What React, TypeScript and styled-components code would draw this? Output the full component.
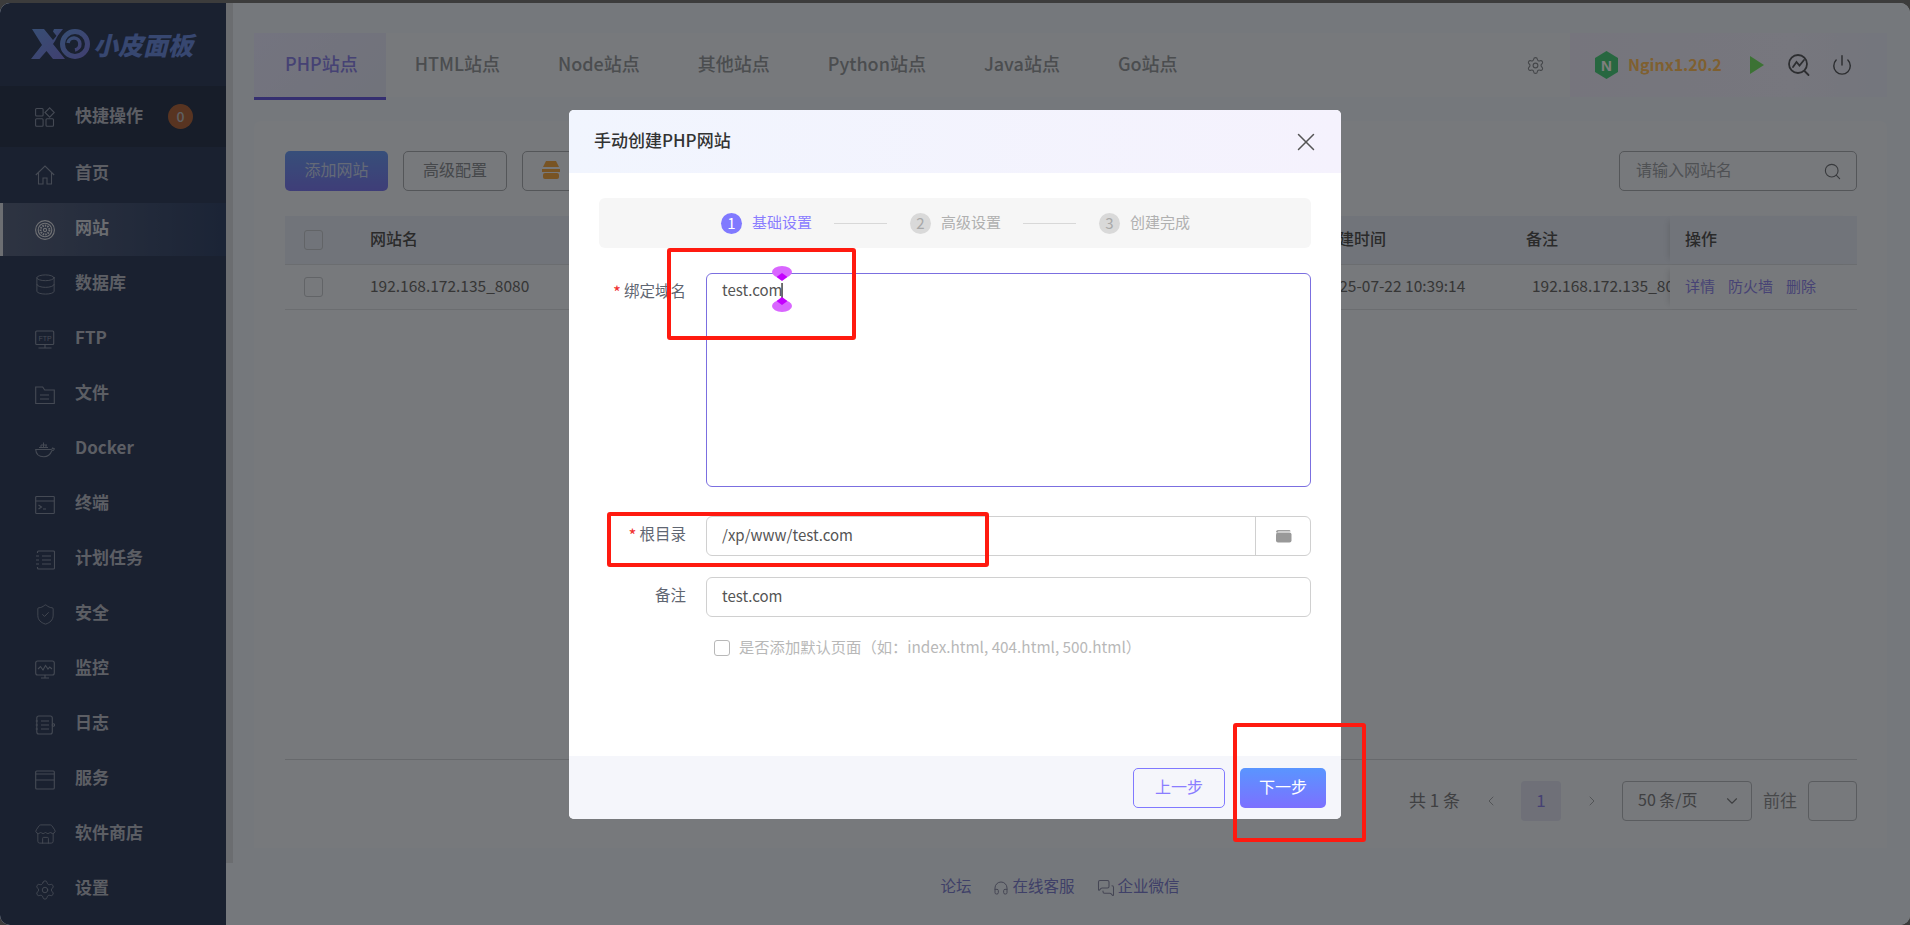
import React from 'react';
import styled, { createGlobalStyle } from 'styled-components';
import { Database, Settings, ShieldCheck, Store, Power, Search, X, ChevronLeft, ChevronRight, ChevronDown, Headphones, MessagesSquare } from 'lucide-react';

const Global = createGlobalStyle`
  html, body { margin: 0; padding: 0; height: 100%; background: #3c3c3c; overflow: hidden; }
  * { box-sizing: border-box; }
  body { font-family: "Noto Sans CJK SC", "Noto Sans", sans-serif; }
  #root { height: 100%; }
`;

const Frame = styled.div`
  position: relative; height: 922px; margin-top: 3px; display: flex; overflow: hidden;
  border-radius: 10px; background: #eaf0f8;
`;
const Sidebar = styled.aside`
  width: 226px; flex: none; background: #344260; display: flex; flex-direction: column;
`;
const LogoBar = styled.div`
  height: 83px; display: flex; align-items: flex-start; padding: 26px 0 0 31px; gap: 2px;
`;
const LogoText = styled.span`
  font-size: 25px; line-height: 30px; font-weight: 900; font-style: italic; color: #6f8ee0;
`;
const QuickRow = styled.div`
  height: 61px; display: flex; align-items: center; padding-left: 35px; gap: 20px; background: #2e3a52;
  position: relative;
`;
const MenuItem = styled.div<{ $active?: boolean }>`
  height: ${p => (p.$active ? '53px' : '55px')};
  margin: ${p => (p.$active ? '1px 0' : '0')};
  display: flex; align-items: center; gap: 20px; padding-left: ${p => (p.$active ? '32px' : '35px')};
  border-left: ${p => (p.$active ? '3px solid #d8dce4' : '0')};
  background: ${p => (p.$active ? 'linear-gradient(90deg,#5c6884,#36486c)' : 'transparent')};
  color: ${p => (p.$active ? '#d4d8e0' : '#b8bcc8')};
  svg { color: ${p => (p.$active ? '#dfe2e8' : '#8a94a8')}; }
`;
const IconSlot = styled.span`
  width: 20px; height: 20px; flex: none; display: flex; align-items: center; justify-content: center;
  color: #8a94a8; svg { flex: none; }
`;
const MenuText = styled.span`
  font-size: 17px; font-weight: 700; line-height: 24px; color: inherit; margin-bottom: 5px;
`;
const QuickText = styled(MenuText)` color: #b8bcc8; margin-bottom: 3px; `;
const Badge = styled.span`
  position: absolute; left: 168px; top: 18px; width: 25px; height: 25px; border-radius: 50%;
  background: #f0803c; color: #fff; opacity: .68; font-size: 14px; font-weight: 500; display: flex; align-items: center; justify-content: center;
  padding-bottom: 2px;
`;
const ScrollTrack = styled.div`
  width: 7px; flex: none; display: flex; flex-direction: column;
`;
const ScrollThumb = styled.div`
  height: 860px; background: #d6dae0;
`;
const Main = styled.main`
  flex: 1; min-width: 0; display: flex; flex-direction: column; padding: 30px 23px 0 21px;
`;
const TabBar = styled.div`
  height: 64px; margin-bottom: 24px; display: flex; align-items: flex-start; background: #eef2f8; flex: none;
`;
const Tab = styled.div<{ $active?: boolean }>`
  height: ${p => (p.$active ? '67px' : '64px')}; padding: 0 ${p => (p.$active ? '28px 4px 31px' : '29px 4px')};
  display: flex; align-items: center; font-size: 18px; font-weight: 500;
  color: ${p => (p.$active ? '#8c85e8' : '#969a9f')};
  background: ${p => (p.$active ? 'linear-gradient(135deg,#e8e8ff,#e2e6f6)' : 'transparent')};
  border-bottom: ${p => (p.$active ? '3px solid #6a5fe0' : '0')};
`;
const Gear = styled.span`
  margin-left: auto; margin-right: 25px; height: 64px; display: flex; align-items: center; color: #8a8e94;
`;
const ServerBox = styled.div`
  width: 317px; height: 64px; display: flex; align-items: center; padding-left: 25px;
  background: linear-gradient(90deg,#ecebfa,#eeeefc 70%,#e8ecfa);
`;
const NginxName = styled.span`
  margin: 0 0 3px 10px; font-size: 16px; font-weight: 700; color: #ffc060; width: 96px;
`;
const ServerAction = styled.span<{ $gap: number }>`
  margin-left: ${p => p.$gap}px; display: flex; color: #5a5d62;
`;
const Panel = styled.section`
  height: 727px; flex: none; background: #eef2f8; border-radius: 6px 6px 0 0; padding: 30px 30px 27px 31px;
  display: flex; flex-direction: column;
`;
const Toolbar = styled.div`
  height: 40px; display: flex; gap: 15px; margin-bottom: 25px; flex: none;
`;
const PrimaryButton = styled.div`
  width: 103px; border-radius: 5px; background: linear-gradient(180deg,#6e9ef4,#7e7bf0);
  color: #c8d4ee; font-size: 16px; display: flex; align-items: center; justify-content: center; padding-bottom: 4px;
`;
const PlainButton = styled.div<{ $w: number; $center?: boolean }>`
  width: ${p => p.$w}px; border-radius: 5px; border: 1px solid #a8acb2; color: #8c9096; font-size: 16px;
  display: flex; align-items: center; padding: ${p => (p.$center ? '0 0 4px' : '0 0 2px 19px')};
  justify-content: ${p => (p.$center ? 'center' : 'flex-start')};
`;
const SearchBox = styled.div`
  margin-left: auto; width: 238px; border-radius: 5px; border: 1px solid #a8acb2; display: flex; align-items: center;
  justify-content: space-between; padding: 0 14px 0 16px; color: #9fa3a9; font-size: 16px;
  svg { color: #70747a; }
`;
const SearchHint = styled.span` margin-bottom: 4px; `;
const Table = styled.div`
  flex: 1; min-height: 0; border-bottom: 1px solid #cfd3d8;
`;
const Row = styled.div<{ $head?: boolean }>`
  height: ${p => (p.$head ? '49px' : '45px')}; display: flex; align-items: center;
  background: ${p => (p.$head ? '#e2e8f4' : 'transparent')};
  border-bottom: 1px solid #d6dae0;
  font-size: ${p => (p.$head ? '16px' : '15.500px')};
  color: ${p => (p.$head ? '#555' : '#6c6c6c')};
  font-weight: ${p => (p.$head ? 500 : 400)};
`;
const CheckCell = styled.div`
  width: 85px; flex: none; padding-left: 19px; display: flex;
`;
const BackCheck = styled.span`
  width: 19px; height: 20px; border: 1px solid #c4c8ce; border-radius: 3px;
`;
const NameCell = styled.div` flex: 1; margin-bottom: 4px; `;
const DateCell = styled.div` width: 204px; flex: none; white-space: nowrap; margin-bottom: 4px; `;
const NoteCell = styled.div<{ $indent?: number }>`
  width: 144px; flex: none; padding-left: ${p => p.$indent || 0}px; overflow: hidden; white-space: nowrap; margin-bottom: 4px;
`;
const OpCell = styled.div`
  width: 187px; flex: none; height: 100%; padding: 0 0 4px 15px; display: flex; align-items: center; gap: 13px;
  box-shadow: -6px 0 6px -5px rgba(0,0,0,.12);
`;
const OpLink = styled.span`
  color: #8f87ea; font-size: 15px; 
`;
const Pager = styled.div`
  height: 40px; margin-top: 21px; flex: none; display: flex; align-items: center; justify-content: flex-end;
  font-size: 17px; color: #7e8084;
`;
const PagerText = styled.span` margin-bottom: 4px; `;
const PagerArrow = styled.span<{ $l: number; $r: number }>`
  margin: 0 ${p => p.$r}px 0 ${p => p.$l}px; display: flex; color: #9a9ea4;
`;
const PageNum = styled.div`
  width: 40px; height: 40px; border-radius: 4px; background: #dee0f0; color: #8c85e8;
  display: flex; align-items: center; justify-content: center; font-size: 17px; padding-bottom: 4px;
`;
const PageSelect = styled.div`
  width: 130px; height: 40px; border: 1px solid #b4b8be; border-radius: 4px; font-size: 16px;
  display: flex; align-items: center; justify-content: space-between; padding: 0 10px 0 15px; color: #7e8084;
`;
const GotoText = styled.span` margin: 0 0 4px 11px; font-size: 17px; color: #8e9094; `;
const GotoInput = styled.div`
  width: 49px; height: 40px; margin-left: 11px; border: 1px solid #b4b8be; border-radius: 4px;
`;
const Foot = styled.footer`
  flex: 1; display: flex; align-items: center; justify-content: center; padding: 0 21px 0 0;
  gap: 22px; font-size: 15.500px; color: #7e80d0;
`;
const FootLink = styled.span`
  display: flex; align-items: center; gap: 3px;
  svg { color: #8a8ca8; margin-top: 3px; }
`;

const Overlay = styled.div`
  position: absolute; inset: 0; background: rgba(0,0,0,.5); display: flex; justify-content: center; align-items: flex-start;
`;
const Modal = styled.div`
  width: 772px; height: 709px; margin-top: 107px; background: #fff; border-radius: 5px; overflow: hidden;
  display: flex; flex-direction: column;
`;
const ModalHead = styled.header`
  height: 63px; flex: none; padding: 0 20px 0 25px; display: flex; align-items: center; justify-content: space-between;
  background: linear-gradient(90deg,#f1f5fe,#f5f2fd);
  font-size: 17px; font-weight: 500; color: #333; 
  svg { color: #555; }
`;
const ModalTitle = styled.span` margin-bottom: 4px; `;
const ModalBody = styled.div`
  flex: 1; padding: 25px 30px 0;
`;
const Steps = styled.div`
  height: 50px; border-radius: 6px; background: #f6f6f6; margin-bottom: 25px; display: flex; align-items: center; padding-left: 122px;
`;
const StepDot = styled.span<{ $on?: boolean }>`
  width: 21px; height: 21px; border-radius: 50%; flex: none; display: flex; align-items: center; justify-content: center;
  font-size: 15px; padding-bottom: 2px; background: ${p => (p.$on ? '#8079ff' : '#d9d9d9')}; color: ${p => (p.$on ? '#fff' : '#a8a8a8')};
`;
const StepLabel = styled.span<{ $on?: boolean }>`
  margin: 0 0 4px 10px; font-size: 15px; width: 60px; white-space: nowrap; color: ${p => (p.$on ? '#8a7dff' : '#b0b0b0')};
`;
const StepLine = styled.span`
  width: 53px; height: 1px; background: #d8d8d8; margin: 0 23px 0 22px; flex: none;
`;
const FormRow = styled.div<{ $mb: number }>`
  display: flex; align-items: flex-start; margin-bottom: ${p => p.$mb}px;
`;
const FieldLabel = styled.label<{ $pt: number }>`
  width: 107px; flex: none; padding-right: 20px; padding-top: ${p => p.$pt}px; text-align: right; font-size: 15.500px; line-height: 22px; color: #5f6672;
  white-space: nowrap;
`;
const Star = styled.span`
  color: #f03030; margin-right: 3px; font-size: 17px; vertical-align: -2px;
`;
const TextArea = styled.div`
  position: relative; flex: 1; height: 214px; border: 1px solid #7b6fe0; border-radius: 6px; padding: 4px 15px;
  font-size: 15px; line-height: 24px; color: #555;
`;
const Handles = styled.svg`
  position: absolute; left: 65px; top: -8px;
`;
const InputBox = styled.div`
  flex: 1; height: 40px; border: 1px solid #d0d0d0; border-radius: 6px; display: flex; align-items: center; padding-left: 15px;
  font-size: 15px; color: #555; position: relative;
`;
const InputValue = styled.span` margin-bottom: 4px; `;
const InputAddon = styled.div`
  margin-left: auto; width: 55px; height: 100%; border-left: 1px solid #d0d0d0; display: flex; align-items: center; justify-content: center;
`;
const CheckRow = styled.div`
  display: flex; align-items: center; gap: 9px; margin-left: 115px; font-size: 15.300px; color: #b8b8b8; height: 18px;
`;
const CheckBox = styled.span`
  width: 16px; height: 16px; border: 1px solid #b8b8b8; border-radius: 3px; flex: none;
`;
const CheckText = styled.span` margin-bottom: 4px; white-space: nowrap; `;
const ModalFoot = styled.footer`
  height: 63px; flex: none; background: #f5f6fb; padding: 12px 15px 11px; display: flex; justify-content: flex-end; gap: 15px;
`;
const GhostBtn = styled.div`
  width: 92px; height: 40px; border: 1px solid #8079ff; border-radius: 5px; color: #8a7dff; font-size: 16px; padding-bottom: 4px;
  display: flex; align-items: center; justify-content: center;
`;
const NextBtn = styled.div`
  width: 86px; height: 40px; border-radius: 5px; background: linear-gradient(180deg,#5a95ff,#7c70ff); color: #fff; font-size: 16px; padding-bottom: 4px;
  display: flex; align-items: center; justify-content: center;
`;
const Mark = styled.div<{ $l: number; $t: number; $w: number; $h: number }>`
  position: fixed; left: ${p => p.$l}px; top: ${p => p.$t}px; width: ${p => p.$w}px; height: ${p => p.$h}px;
  border: 4px solid #ff1a10; border-radius: 3px; pointer-events: none;
`;

const S = { width: 20, height: 20, viewBox: '0 0 20 20', fill: 'none', stroke: 'currentColor', strokeWidth: 1.1 } as const;

const QuickSvg = () => (
  <svg {...S}><rect x=".6" y="1.500" width="7.500" height="7.500" rx="1" /><path d="M14.700.8l4.600 4.700-4.600 4.700-4.700-4.700z" /><rect x=".6" y="11.700" width="7.500" height="7.500" rx="1" /><rect x="11" y="11.700" width="7.500" height="7.500" rx="1" /></svg>
);
const HomeSvg = () => (
  <svg {...S}><path d="M.8 10L10 1l9.200 9M3.500 7.500V19H8v-6h4v6h4.500V7.500" /></svg>
);
const SiteSvg = () => (
  <svg {...S}><circle cx="10" cy="10" r="9.400" /><circle cx="10" cy="10" r="6.800" /><circle cx="10" cy="10" r="4.400" strokeDasharray="1.500 1" strokeWidth="2" /><circle cx="10" cy="10" r="1.600" /></svg>
);
const FtpSvg = () => (
  <svg {...S}><rect x=".7" y="1" width="18" height="13.500" rx="1" /><path d="M10 14.500v3M3.500 18h13" /><text x="10" y="11" fontSize="7" fontFamily="Liberation Sans" textAnchor="middle" stroke="none" fill="currentColor">FTP</text></svg>
);
const FolderSvg = () => (
  <svg {...S}><path d="M.7 2h7l2 3h9.600v13.500H.7z" /><path d="M5 10h9M5 14h9" /></svg>
);
const DockerSvg = () => (
  <svg {...S}><path d="M.7 9.500h15c1 0 1.800-.6 2-1.500l1.700.8c-.5 1.500-1.500 2-2.600 2-1.400 3.700-4.300 6-8 6C4 16.800 1 14 .7 9.500z" /><path d="M4 7.500h9M6 5h6M8.500 2.500v5M6 5v2.500M11 5v2.500" strokeWidth="1" /></svg>
);
const TermSvg = () => (
  <svg {...S}><rect x=".7" y="1.500" width="18.600" height="17" rx=".8" /><path d="M.7 6h18.600M3.500 10l3 2-3 2M8 14h3" /></svg>
);
const TaskSvg = () => (
  <svg {...S}><path d="M2.500 3V2a1 1 0 0 1 1-1h15a1 1 0 0 1 1 1v16a1 1 0 0 1-1 1h-15a1 1 0 0 1-1-1v-1" /><path d="M7 6h9M7 10h9M7 14h9M1 6h3M1 10h3M1 14h3" /></svg>
);
const MonSvg = () => (
  <svg {...S}><rect x=".7" y="1" width="18.600" height="14" rx="2" /><path d="M3 9l2.500-2.500L8 10l2.500-4.500L13 9l1.700-2 2.300 2M6 18h8M10 15v3" /></svg>
);
const LogSvg = () => (
  <svg {...S}><rect x="1.800" y="1" width="15.500" height="18" rx="2" /><path d="M6 6h8M6 10h8M6 14h8M.7 6h2.200M.7 10h2.200M.7 14h2.200" /><circle cx="18.400" cy="10" r="1.200" /></svg>
);
const ServSvg = () => (
  <svg {...S}><rect x=".7" y="1" width="18.600" height="18" rx="1" /><path d="M.7 4h18.600M.7 10h18.600" /></svg>
);

const Logo = () => (
  <svg width="60" height="30" viewBox="0 0 60 30">
    <defs>
      <linearGradient id="lg" x1="0" y1="0" x2="1" y2="1"><stop offset="0" stopColor="#6f9ce8" /><stop offset="1" stopColor="#8080e0" /></linearGradient>
    </defs>
    <path d="M1 0h12l9 11 6-7h0l-4 8-2 3 12 15H22l-6.500-8-7 8H0l11-14z" fill="url(#lg)" />
    <path d="M23 0h9l-6 7.500-4-5z" fill="url(#lg)" />
    <circle cx="44" cy="15" r="12.500" fill="none" stroke="url(#lg)" strokeWidth="5" />
    <path d="M37 14a6 6 0 1 1 7 7" fill="none" stroke="url(#lg)" strokeWidth="3.500" />
  </svg>
);
const NginxHex = () => (
  <svg width="23" height="28" viewBox="0 0 23 28">
    <path d="M11.500 0L23 7v14l-11.500 7L0 21V7z" fill="#4fcf80" />
    <text x="11.500" y="19.500" fontSize="15" fontWeight="700" fontFamily="Liberation Sans" textAnchor="middle" fill="#fff">N</text>
  </svg>
);
const Play = () => (
  <svg width="14" height="18" viewBox="0 0 14 18"><path d="M0 0l14 9-14 9z" fill="#78e468" /></svg>
);
const Pulse = () => (
  <svg width="22" height="24" viewBox="0 0 22 24" fill="none" stroke="currentColor" strokeWidth="1.800" strokeLinecap="round">
    <circle cx="10" cy="11" r="9" /><path d="M5 14l3.500-5 3 3.500L16 7M16.500 18l4 4" />
  </svg>
);
const FolderFill = () => (
  <svg width="17" height="14" viewBox="0 0 17 14"><path d="M1 3c0-1 .6-2 2-2h11c1 0 1.500.5 1.500 1.500H4C3 2.500 2.500 3 2.500 4" fill="#a0a0a0" /><rect x="1" y="3.500" width="15.500" height="10" rx="2" fill="#999" /></svg>
);
const Cube = () => (
  <svg width="18" height="18" viewBox="0 0 18 18"><path d="M4 0h10l3 6H1z" fill="#f0a848" /><path d="M0 8h18v3H0z" fill="#f0a848" /><rect x="1" y="12" width="16" height="6" rx="2" fill="#f0a848" /></svg>
);
const CaretHandles = () => (
  <Handles width="20" height="46" viewBox="0 0 20 46">
    <ellipse cx="10" cy="6" rx="10" ry="6" fill="#d966ff" />
    <path d="M4.500 11L10 7l5.500 4L10 15z" fill="#c400ff" />
    <rect x="9.300" y="17" width="1.500" height="16" fill="#444" />
    <ellipse cx="10" cy="40" rx="10" ry="6" fill="#d966ff" />
    <path d="M4.500 35L10 31l5.500 4L10 39z" fill="#c400ff" />
  </Handles>
);

const menu: [string, React.ReactNode][] = [
  ['首页', <HomeSvg key="h" />],
  ['网站', <SiteSvg key="s" />],
  ['数据库', <Database key="d" size={23} strokeWidth={0.95} />],
  ['FTP', <FtpSvg key="f" />],
  ['文件', <FolderSvg key="fo" />],
  ['Docker', <DockerSvg key="do" />],
  ['终端', <TermSvg key="t" />],
  ['计划任务', <TaskSvg key="ta" />],
  ['安全', <ShieldCheck key="sh" size={23} strokeWidth={0.95} />],
  ['监控', <MonSvg key="m" />],
  ['日志', <LogSvg key="l" />],
  ['服务', <ServSvg key="se" />],
  ['软件商店', <Store key="st" size={23} strokeWidth={0.95} />],
  ['设置', <Settings key="g" size={22} strokeWidth={1} />],
];
const tabs = ['PHP站点', 'HTML站点', 'Node站点', '其他站点', 'Python站点', 'Java站点', 'Go站点'];

export default function App() {
  return (
    <>
      <Global />
      <Frame>
        <Sidebar>
          <LogoBar><Logo /><LogoText>小皮面板</LogoText></LogoBar>
          <QuickRow>
            <IconSlot><QuickSvg /></IconSlot>
            <QuickText>快捷操作</QuickText>
            <Badge>0</Badge>
          </QuickRow>
          {menu.map(([name, icon]) => (
            <MenuItem key={name} $active={name === '网站'}><IconSlot>{icon}</IconSlot><MenuText>{name}</MenuText></MenuItem>
          ))}
        </Sidebar>
        <ScrollTrack><ScrollThumb /></ScrollTrack>
        <Main>
          <TabBar>
            {tabs.map((t, i) => <Tab key={t} $active={i === 0}>{t}</Tab>)}
            <Gear><Settings size={19} strokeWidth={1.4} /></Gear>
            <ServerBox>
              <NginxHex />
              <NginxName>Nginx1.20.2</NginxName>
              <ServerAction $gap={26}><Play /></ServerAction>
              <ServerAction $gap={24}><Pulse /></ServerAction>
              <ServerAction $gap={21}><Power size={22} strokeWidth={1.6} /></ServerAction>
            </ServerBox>
          </TabBar>
          <Panel>
            <Toolbar>
              <PrimaryButton>添加网站</PrimaryButton>
              <PlainButton $w={104} $center>高级配置</PlainButton>
              <PlainButton $w={130}><Cube /></PlainButton>
              <SearchBox><SearchHint>请输入网站名</SearchHint><Search size={19} strokeWidth={1.4} /></SearchBox>
            </Toolbar>
            <Table>
              <Row $head>
                <CheckCell><BackCheck /></CheckCell>
                <NameCell>网站名</NameCell>
                <DateCell>创建时间</DateCell>
                <NoteCell>备注</NoteCell>
                <OpCell>操作</OpCell>
              </Row>
              <Row>
                <CheckCell><BackCheck /></CheckCell>
                <NameCell>192.168.172.135_8080</NameCell>
                <DateCell>2025-07-22 10:39:14</DateCell>
                <NoteCell $indent={6}>192.168.172.135_8080</NoteCell>
                <OpCell><OpLink>详情</OpLink><OpLink>防火墙</OpLink><OpLink>删除</OpLink></OpCell>
              </Row>
            </Table>
            <Pager>
              <PagerText>共 1 条</PagerText>
              <PagerArrow $l={23} $r={22}><ChevronLeft size={16} strokeWidth={1.3} /></PagerArrow>
              <PageNum>1</PageNum>
              <PagerArrow $l={23} $r={22}><ChevronRight size={16} strokeWidth={1.3} /></PagerArrow>
              <PageSelect><PagerText>50 条/页</PagerText><ChevronDown size={18} strokeWidth={1.5} /></PageSelect>
              <GotoText>前往</GotoText>
              <GotoInput />
            </Pager>
          </Panel>
          <Foot>
            <FootLink><PagerText>论坛</PagerText></FootLink>
            <FootLink><Headphones size={16} strokeWidth={1.5} /><PagerText>在线客服</PagerText></FootLink>
            <FootLink><MessagesSquare size={18} strokeWidth={1.4} /><PagerText>企业微信</PagerText></FootLink>
          </Foot>
        </Main>
        <Overlay>
          <Modal>
            <ModalHead><ModalTitle>手动创建PHP网站</ModalTitle><X size={30} strokeWidth={1.2} /></ModalHead>
            <ModalBody>
              <Steps>
                <StepDot $on>1</StepDot><StepLabel $on>基础设置</StepLabel><StepLine />
                <StepDot>2</StepDot><StepLabel>高级设置</StepLabel><StepLine />
                <StepDot>3</StepDot><StepLabel>创建完成</StepLabel>
              </Steps>
              <FormRow $mb={29}>
                <FieldLabel $pt={6}><Star>*</Star>绑定域名</FieldLabel>
                <TextArea>test.com<CaretHandles /></TextArea>
              </FormRow>
              <FormRow $mb={21}>
                <FieldLabel $pt={6}><Star>*</Star>根目录</FieldLabel>
                <InputBox><InputValue>/xp/www/test.com</InputValue><InputAddon><FolderFill /></InputAddon></InputBox>
              </FormRow>
              <FormRow $mb={22}>
                <FieldLabel $pt={6}>备注</FieldLabel>
                <InputBox><InputValue>test.com</InputValue></InputBox>
              </FormRow>
              <CheckRow><CheckBox /><CheckText>是否添加默认页面（如：index.html, 404.html, 500.html）</CheckText></CheckRow>
            </ModalBody>
            <ModalFoot><GhostBtn>上一步</GhostBtn><NextBtn>下一步</NextBtn></ModalFoot>
          </Modal>
        </Overlay>
      </Frame>
      <Mark $l={667} $t={248} $w={189} $h={92} />
      <Mark $l={607} $t={512} $w={382} $h={55} />
      <Mark $l={1233} $t={723} $w={133} $h={119} />
    </>
  );
}
